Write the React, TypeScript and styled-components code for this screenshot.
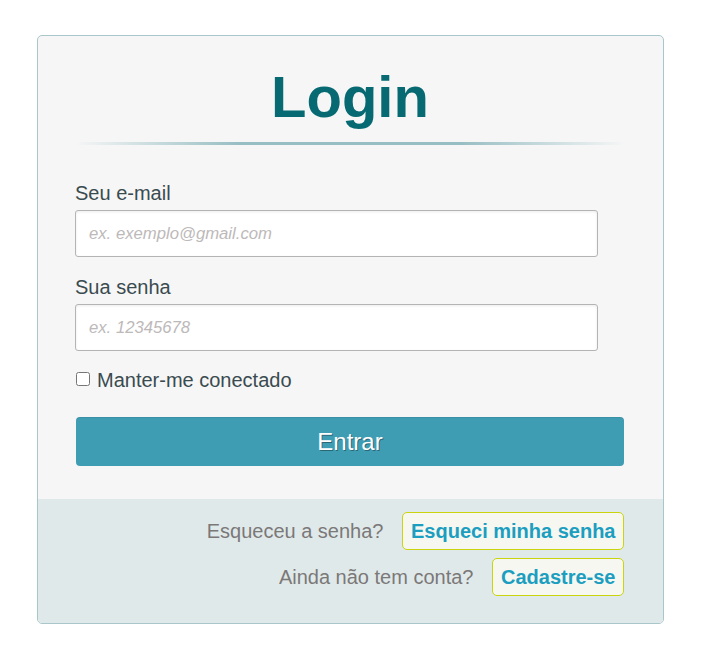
import React from "react";
import styled, { createGlobalStyle } from "styled-components";

const GlobalStyle = createGlobalStyle`
  html, body {
    margin: 0;
    padding: 0;
    background: #ffffff;
    font-family: "Liberation Sans", Arial, sans-serif;
  }
  * { box-sizing: border-box; }
`;

const Page = styled.div`
  padding: 35px 0 0 37px;
`;

const Card = styled.div`
  width: 627px;
  border: 1px solid #a9c6cb;
  border-radius: 5px;
  background: #f6f6f6;
  overflow: hidden;
`;

const Body = styled.form`
  display: flex;
  flex-direction: column;
  padding: 25px 38px 33px 37px;
`;

const Title = styled.h1`
  margin: 0;
  text-align: center;
  font-size: 58px;
  line-height: 71px;
  font-weight: bold;
  color: #076a72;
`;

const Divider = styled.hr`
  margin: 10px 0 37px;
  height: 3px;
  border: 0;
  background: linear-gradient(
    to right,
    rgba(151, 190, 195, 0) 0%,
    #97bec3 30%,
    #97bec3 70%,
    rgba(151, 190, 195, 0) 100%
  );
`;

const Field = styled.div<{ $gap?: number }>`
  display: flex;
  flex-direction: column;
  margin-bottom: ${(p) => p.$gap ?? 0}px;
`;

const Label = styled.label`
  font-size: 20px;
  line-height: 23px;
  color: #3a4b50;
  margin-bottom: 5px;
`;

const Input = styled.input`
  width: 95%;
  height: 47px;
  border: 1px solid #b4b4b4;
  border-radius: 3px;
  background: #ffffff;
  box-shadow: inset 0 1px 3px rgba(0, 0, 0, 0.08);
  padding: 0 13px;
  font-family: "Liberation Sans", Arial, sans-serif;
  font-size: 16.7px;
  color: #333;
  outline: none;
  &::placeholder {
    font-style: italic;
    color: #bdb9b9;
  }
`;

const CheckRow = styled.label`
  display: flex;
  align-items: flex-start;
  font-size: 20px;
  line-height: 23px;
  color: #3a4b50;
`;

const Check = styled.input`
  width: 14px;
  height: 14px;
  margin: 3px 7px 0 1px;
`;

const Submit = styled.button`
  margin: 25px 1px 0;
  height: 49px;
  border: 0;
  border-radius: 4px;
  background: #3f9db3;
  box-shadow: inset 0 1px 0 rgba(0, 0, 0, 0.08);
  color: #ffffff;
  font-family: "Liberation Sans", Arial, sans-serif;
  font-size: 24px;
  text-shadow: 1px 1px 0 rgba(0, 0, 0, 0.35);
  cursor: pointer;
`;

const Footer = styled.div`
  display: flex;
  flex-direction: column;
  gap: 8px;
  background: #e0e9ea;
  padding: 13px 39px 27px;
`;

const FooterRow = styled.div`
  display: flex;
  justify-content: flex-end;
  align-items: center;
  gap: 19px;
`;

const Hint = styled.span`
  font-size: 20px;
  color: #7b7878;
`;

const LinkBox = styled.a`
  display: block;
  padding: 7px 7.5px;
  line-height: 22px;
  border: 1px solid #c9d40c;
  border-radius: 5px;
  background: #f6f7f1;
  color: #1c9ec0;
  font-size: 20px;
  font-weight: bold;
  text-decoration: none;
`;

export default function App() {
  return (
    <>
      <GlobalStyle />
      <Page>
        <Card>
          <Body onSubmit={(e) => e.preventDefault()}>
            <Title>Login</Title>
            <Divider />
            <Field $gap={19}>
              <Label htmlFor="email">Seu e-mail</Label>
              <Input id="email" type="email" placeholder="ex. exemplo@gmail.com" />
            </Field>
            <Field $gap={18}>
              <Label htmlFor="senha">Sua senha</Label>
              <Input id="senha" type="password" placeholder="ex. 12345678" />
            </Field>
            <CheckRow>
              <Check type="checkbox" />
              Manter-me conectado
            </CheckRow>
            <Submit type="submit">Entrar</Submit>
          </Body>
          <Footer>
            <FooterRow>
              <Hint>Esqueceu a senha?</Hint>
              <LinkBox href="#">Esqueci minha senha</LinkBox>
            </FooterRow>
            <FooterRow>
              <Hint>Ainda não tem conta?</Hint>
              <LinkBox href="#">Cadastre-se</LinkBox>
            </FooterRow>
          </Footer>
        </Card>
      </Page>
    </>
  );
}
